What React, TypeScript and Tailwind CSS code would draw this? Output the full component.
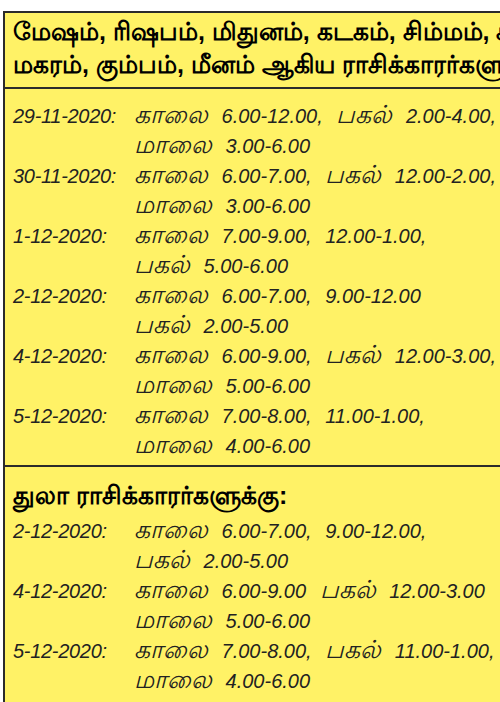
const groupOne = [
  { date: "29-11-2020:", lines: ["காலை 6.00-12.00, பகல் 2.00-4.00,", "மாலை 3.00-6.00"] },
  { date: "30-11-2020:", lines: ["காலை 6.00-7.00, பகல் 12.00-2.00,", "மாலை 3.00-6.00"] },
  { date: "1-12-2020:", lines: ["காலை 7.00-9.00, 12.00-1.00,", "பகல் 5.00-6.00"] },
  { date: "2-12-2020:", lines: ["காலை 6.00-7.00, 9.00-12.00", "பகல் 2.00-5.00"] },
  { date: "4-12-2020:", lines: ["காலை 6.00-9.00, பகல் 12.00-3.00,", "மாலை 5.00-6.00"] },
  { date: "5-12-2020:", lines: ["காலை 7.00-8.00, 11.00-1.00,", "மாலை 4.00-6.00"] },
];

const groupTwo = [
  { date: "2-12-2020:", lines: ["காலை 6.00-7.00, 9.00-12.00,", "பகல் 2.00-5.00"] },
  { date: "4-12-2020:", lines: ["காலை 6.00-9.00 பகல் 12.00-3.00", "மாலை 5.00-6.00"] },
  { date: "5-12-2020:", lines: ["காலை 7.00-8.00, பகல் 11.00-1.00,", "மாலை 4.00-6.00"] },
];

const tamil = /[\u0B80-\u0BFF]/;

// Tamil words come out small in the fallback font, so size them up
function Line({ text }: { text: string }) {
  const words = text.split(" ");
  return (
    <div>
      {words.map((w, i) => (
        <span key={i}>
          {i > 0 ? " " : ""}
          {tamil.test(w) ? <span className="text-[25px] leading-[10px]">{w}</span> : w}
        </span>
      ))}
    </div>
  );
}

function Entry({ date, lines }: { date: string; lines: string[] }) {
  return (
    <div className="grid grid-cols-[121px_1fr] italic text-[20px] leading-[30px] h-[60px] text-[#222] whitespace-nowrap [word-spacing:8px]">
      <div className="tracking-[-0.3px]">{date}</div>
      <div>
        {lines.map((l) => (
          <Line key={l} text={l} />
        ))}
      </div>
    </div>
  );
}

export default function App() {
  return (
    <div
      className="w-[500px] h-[702px] bg-white overflow-hidden pt-[11px] pl-[3px]"
      style={{ fontFamily: '"Liberation Sans", "Noto Sans", sans-serif' }}
    >
      <div className="bg-[#fff266] border-l-[2px] border-t-[2px] border-[#2b2b2b] h-full">
        {/* header */}
        <div className="px-[8px] pt-[2px] pb-[6px] font-bold text-[25px] leading-[33px] text-black whitespace-nowrap border-b-[2px] border-[#2b2b2b] overflow-hidden">
          <div>மேஷம், ரிஷபம், மிதுனம், கடகம், சிம்மம், கன்னி,</div>
          <div>மகரம், கும்பம், மீனம் ஆகிய ராசிக்காரர்களுக்கு:</div>
        </div>
        <div className="px-[8px] pt-[12px] pb-[4px] flex flex-col border-b-[2px] border-[#2b2b2b]">
          {groupOne.map((e) => (
            <Entry key={e.date} {...e} />
          ))}
        </div>
        <div className="px-[8px] pt-[11px]">
          <div className="font-bold text-[25px] leading-[34px] text-black mb-[4px]">துலா ராசிக்காரர்களுக்கு:</div>
          {groupTwo.map((e) => (
            <Entry key={e.date} {...e} />
          ))}
        </div>
      </div>
    </div>
  );
}
